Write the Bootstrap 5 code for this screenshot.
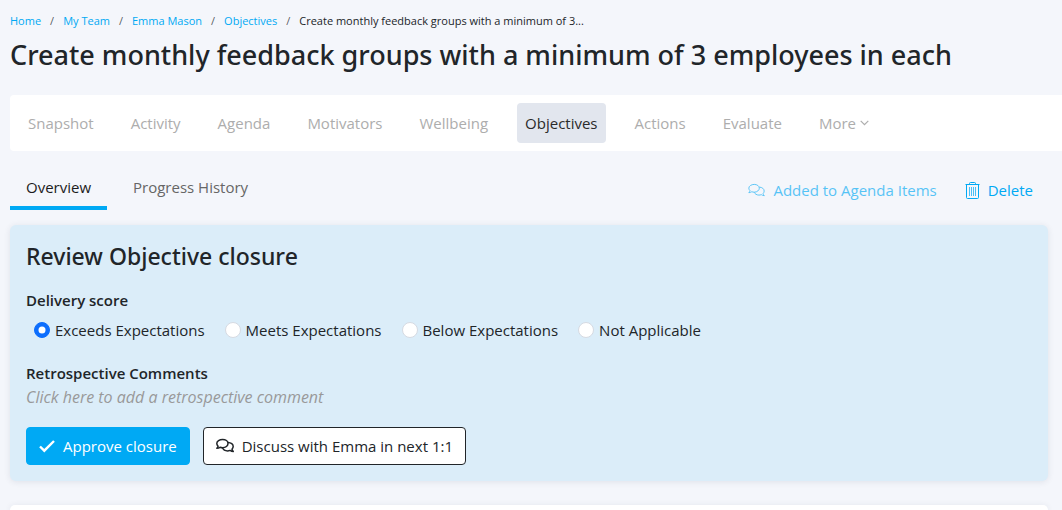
<!DOCTYPE html>
<html lang="en">
<head>
<meta charset="utf-8">
<meta name="viewport" content="width=device-width, initial-scale=1">
<title>Objective – Emma Mason</title>
<link href="https://cdn.jsdelivr.net/npm/bootstrap@5.3.0/dist/css/bootstrap.min.css" rel="stylesheet">
<style>
  :root { --brand: #00a9f4; --ink: #212529; }
  body { background: #f4f6fb; color: var(--ink); font-family: "Segoe UI", "Open Sans", "Noto Sans", sans-serif; font-size: 15px; line-height: 24px; }
  .page-body { padding: 12px 14px 0 10px; }
  .breadcrumb { --bs-breadcrumb-font-size: 11px; --bs-breadcrumb-item-padding-x: 9px; --bs-breadcrumb-item-active-color: var(--ink); --bs-breadcrumb-margin-bottom: 7px; line-height: 18px; }
  .breadcrumb a { color: var(--brand); text-decoration: none; }
  .page-title, .review h2 { font-family: "Segoe UI", "Noto Sans", "Open Sans", sans-serif; font-weight: 500; }
  .page-title { font-size: 27px; line-height: 36px; margin: 0 0 22px; }
  .main-nav { background: #fff; border-radius: 4px 0 0 4px; padding: 8px 10px; margin-right: -14px; gap: 21px; }
  .main-nav .nav-link { color: #adadad; padding: 8px; border-radius: 4px; display: flex; align-items: center; gap: 4px; }
  .main-nav .nav-link.active { background: #e2e6ee; color: #2b2b2b; }
  .tab-row { margin: 15px 0; min-height: 44px; }
  .sub-tabs { gap: 10px; }
  .sub-tabs .nav-link { color: #666; padding: 9px 16px 7px; border-bottom: 4px solid transparent; }
  .sub-tabs .nav-link.active { color: #1c1c1c; border-color: var(--brand); }
  .tab-actions { gap: 28px; padding-right: 15px; padding-top: 4px; }
  .tab-actions .btn { --bs-btn-padding-x: 0; --bs-btn-padding-y: 0; --bs-btn-color: var(--brand); --bs-btn-disabled-color: var(--brand); --bs-btn-disabled-opacity: .65; --bs-btn-border-width: 0; }
  .btn { --bs-btn-font-size: 15px; --bs-btn-line-height: 24px; --bs-btn-border-radius: 4px; display: inline-flex; align-items: center; gap: 8px; }
  .panel { border-radius: 6px; box-shadow: 0 1px 6px rgba(40, 50, 80, .1); }
  .review { background: #dbedf9; padding: 16px; }
  .review h2 { font-size: 23px; line-height: 30px; margin: 0 0 17px; }
  .field-name { font-size: 15px; font-weight: 600; line-height: 24px; margin: 0; float: none; }
  .scores { gap: 20px; padding: 6px 8px 19px; }
  .scores .form-check { margin: 0; padding: 0; min-height: 24px; display: flex; align-items: center; gap: 5px; }
  .scores .form-check-input { float: none; margin: 0; width: 16px; height: 16px; border-color: #d6dae2; }
  .scores .form-check-input:checked { border-color: #0d6efd; }
  .comment { border: 0; background: none; padding: 0; color: #999; font-size: 16px; font-style: italic; display: block; line-height: 24px; text-align: start; }
  .review-actions { gap: 13px; margin-top: 18px; }
  .btn-approve { --bs-btn-bg: var(--brand); --bs-btn-color: #fff; --bs-btn-border-color: var(--brand); --bs-btn-hover-bg: #0098dc; --bs-btn-hover-color: #fff; }
  .btn-discuss { --bs-btn-bg: #fff; --bs-btn-color: var(--ink); --bs-btn-border-color: var(--ink); --bs-btn-hover-bg: #f4f6fb; }
</style>
</head>
<body>
<svg class="d-none" aria-hidden="true">
  <symbol id="chats" viewBox="0 0 18 16">
    <g fill="none" stroke="currentColor" stroke-linejoin="round">
      <path d="M6.600 1.500C9.700 1.500 12 3.300 12 5.500S9.700 9.800 6.600 9.800C5.700 9.800 4.800 9.600 4 9.300C3.200 9.900 2.100 10.300.8 10.300C1.500 9.600 1.900 8.900 2.100 8.200C1.300 7.400.8 6.500.8 5.500C.8 3.300 3.500 1.500 6.600 1.500Z"/>
      <path d="M12 4.400C15 4.500 17.200 6.300 17.200 8.600C17.200 9.600 16.700 10.500 16 11.300C16.200 12 16.600 12.700 17.300 13.500C16 13.500 14.900 13 14.100 12.400C13.300 12.700 12.500 12.900 11.600 12.900C9.200 12.900 7.200 11.600 6.500 9.800"/>
    </g>
  </symbol>
</svg>
<div class="page-body min-vh-100 d-flex flex-column">
  <nav aria-label="breadcrumb">
    <ol class="breadcrumb">
      <li class="breadcrumb-item"><a href="#">Home</a></li>
      <li class="breadcrumb-item"><a href="#">My Team</a></li>
      <li class="breadcrumb-item"><a href="#">Emma Mason</a></li>
      <li class="breadcrumb-item"><a href="#">Objectives</a></li>
      <li class="breadcrumb-item active" aria-current="page">Create monthly feedback groups with a minimum of 3...</li>
    </ol>
  </nav>
  <h1 class="page-title">Create monthly feedback groups with a minimum of 3 employees in each</h1>

  <nav class="nav main-nav" aria-label="Employee">
    <a class="nav-link" href="#">Snapshot</a>
    <a class="nav-link" href="#">Activity</a>
    <a class="nav-link" href="#">Agenda</a>
    <a class="nav-link" href="#">Motivators</a>
    <a class="nav-link" href="#">Wellbeing</a>
    <a class="nav-link active" href="#" aria-current="page">Objectives</a>
    <a class="nav-link" href="#">Actions</a>
    <a class="nav-link" href="#">Evaluate</a>
    <a class="nav-link" href="#">More
      <svg width="9" height="6" viewBox="0 0 9 6" fill="none" stroke="currentColor" stroke-width="1.200" aria-hidden="true"><path d="M.7.8 4.500 4.600 8.300.8"/></svg></a>
  </nav>

  <div class="tab-row d-flex flex-wrap justify-content-between align-items-center">
    <nav class="nav sub-tabs" aria-label="Objective">
      <a class="nav-link active" href="#" aria-current="page">Overview</a>
      <a class="nav-link" href="#">Progress History</a>
    </nav>
    <div class="tab-actions d-flex align-items-center">
      <button class="btn" type="button" disabled><svg width="17" height="15" aria-hidden="true"><use href="#chats"/></svg>Added to Agenda Items</button>
      <button class="btn" type="button"><svg width="15" height="17" viewBox="0 0 15 17" fill="none" stroke="currentColor" aria-hidden="true"><path d="M.5 2.500h14M4.500 2.500v-1q0-1 1-1h4q1 0 1 1v1M1.500 2.500v13q0 1 1 1h10q1 0 1-1V2.500"/><path stroke-width=".7" d="M4.500 5v9M6.500 5v9M8.500 5v9M10.500 5v9"/></svg>Delete</button>
    </div>
  </div>

  <section class="panel review">
    <h2>Review Objective closure</h2>
    <fieldset>
      <legend class="field-name">Delivery score</legend>
      <div class="scores d-flex flex-wrap">
        <div class="form-check"><input class="form-check-input" type="radio" name="score" id="s1" checked><label for="s1">Exceeds Expectations</label></div>
        <div class="form-check"><input class="form-check-input" type="radio" name="score" id="s2"><label for="s2">Meets Expectations</label></div>
        <div class="form-check"><input class="form-check-input" type="radio" name="score" id="s3"><label for="s3">Below Expectations</label></div>
        <div class="form-check"><input class="form-check-input" type="radio" name="score" id="s4"><label for="s4">Not Applicable</label></div>
      </div>
    </fieldset>
    <h3 class="field-name" id="retro">Retrospective Comments</h3>
    <button class="comment" type="button" aria-describedby="retro">Click here to add a retrospective comment</button>
    <div class="review-actions d-flex flex-wrap">
      <button class="btn btn-approve" type="button"><svg width="16" height="14" viewBox="0 0 16 14" fill="none" stroke="currentColor" stroke-width="2.400" aria-hidden="true"><path d="M1 7.500 5.300 11.700 15 2"/></svg>Approve closure</button>
      <button class="btn btn-discuss" type="button"><svg width="18" height="16" stroke-width="1.500" aria-hidden="true"><use href="#chats"/></svg>Discuss with Emma in next 1:1</button>
    </div>
  </section>

  <section class="panel bg-white mt-4 flex-grow-1 rounded-bottom-0" aria-label="Details"></section>
</div>
<script src="https://cdn.jsdelivr.net/npm/bootstrap@5.3.0/dist/js/bootstrap.bundle.min.js"></script>
</body>
</html>
